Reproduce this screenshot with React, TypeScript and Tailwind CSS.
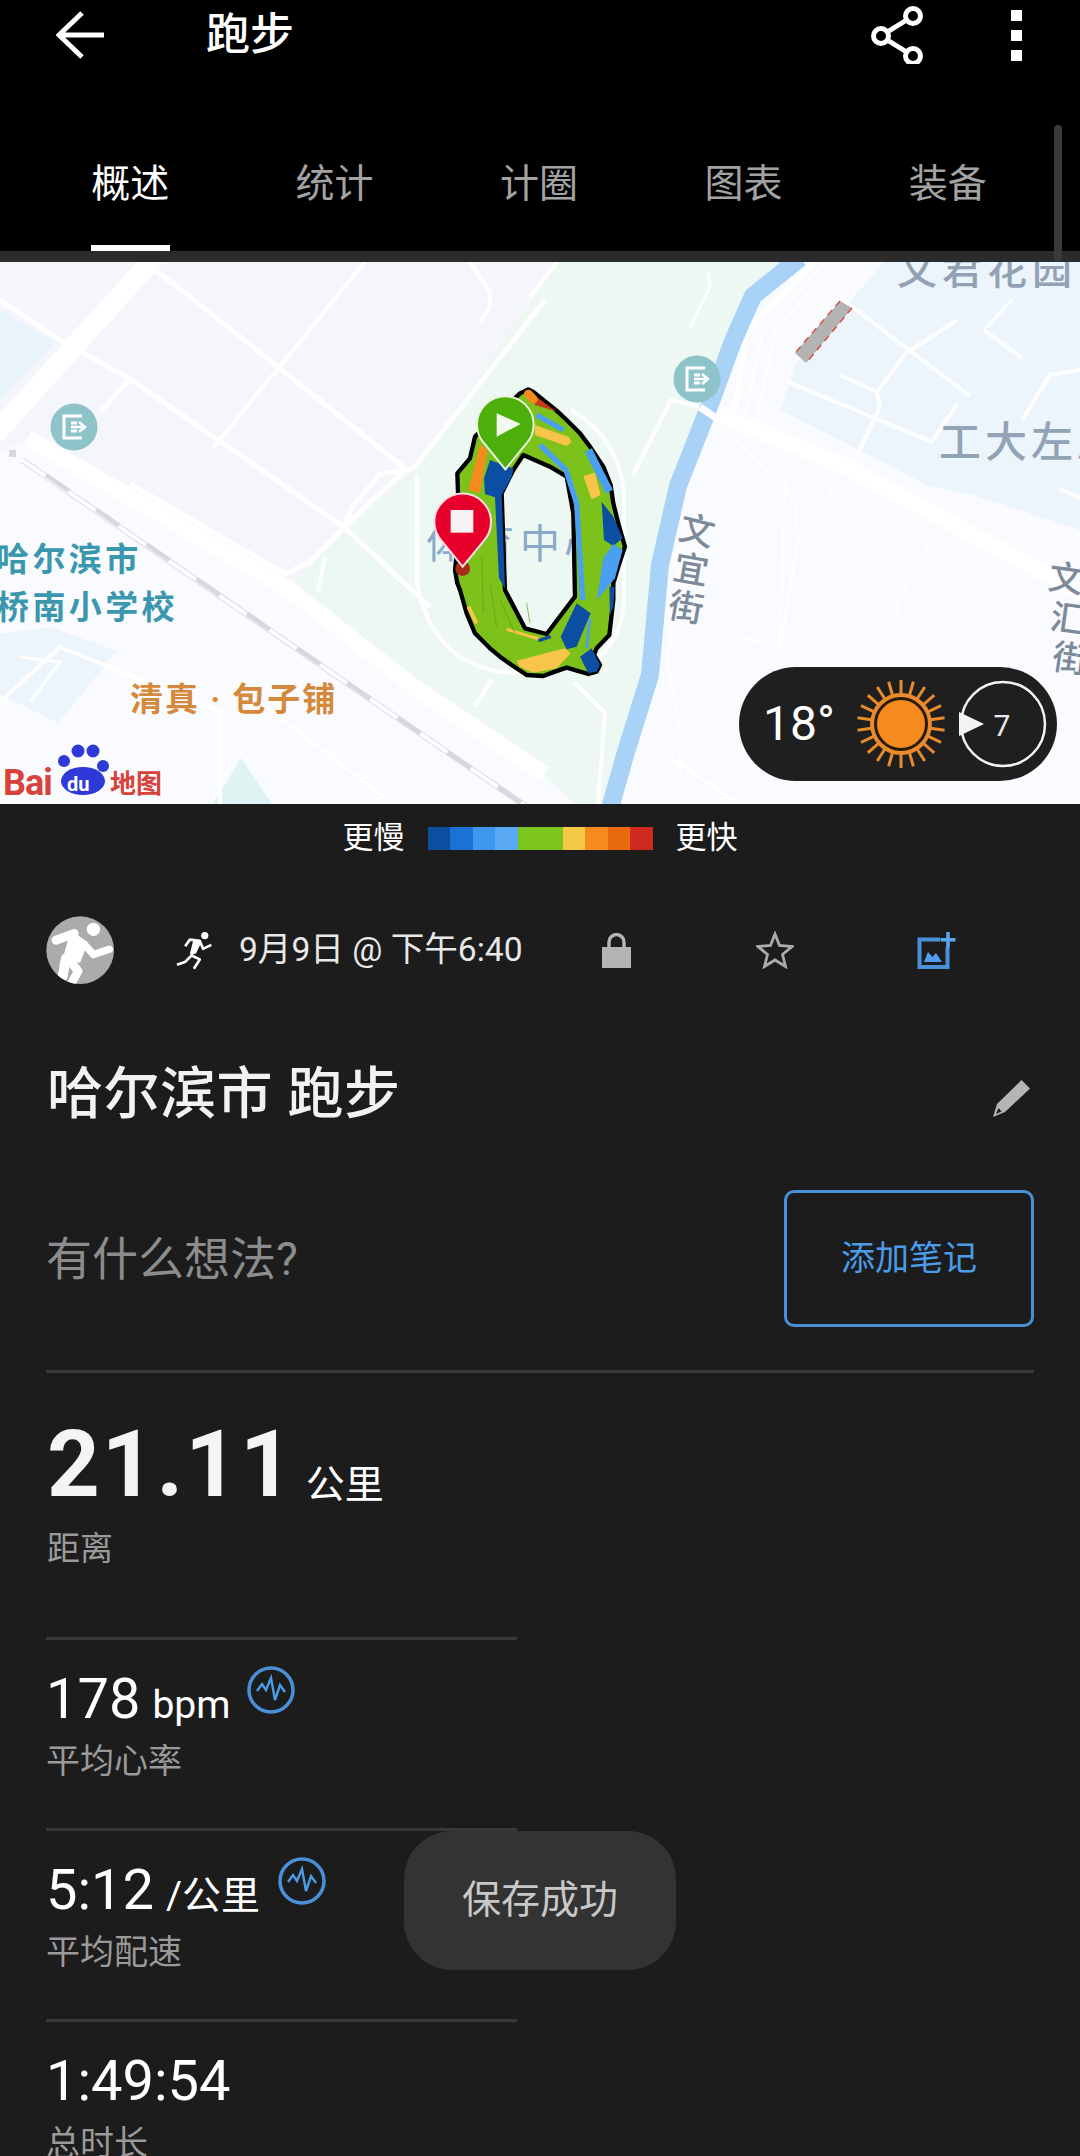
const cjk = "Roboto, 'Noto Sans CJK SC', sans-serif"

const tabs = ["概述", "统计", "计圈", "图表", "装备"]
const legendColors = ["#0b4ea2", "#1a73d4", "#3d97ef", "#5aa9f5", "#7cc51c", "#7cc51c", "#f6c945", "#f58b1f", "#e86a0c", "#cf2a20"]

// white road lines on the map: [path, width]
const roads: [string, number][] = [
  // left side
  ["M155 -5 L-5 172", 20],
  ["M-5 35 L60 78 L130 117 L344 265", 5],
  ["M28 176 L289 327 L413 424 L545 512", 16],
  ["M145 0 L189 34 L406 207", 5],
  ["M365 0 L213 186", 4],
  ["M130 117 L100 150", 5],
  ["M406 207 L344 265 L310 300 L285 312 L130 222", 5],
  ["M344 265 L352 245 L380 212 L413 207", 5],
  ["M344 265 L430 345", 5],
  ["M325 295 L318 330", 4],
  ["M545 38 L413 207", 5],
  ["M470 0 L490 30 L490 45 L480 60", 4],
  ["M0 440 L60 385 L220 450 L220 542", 4],
  ["M20 395 L60 400 L30 440", 3],
  ["M260 440 L390 540", 3],
  // park ring
  ["M417 213 L417 320 Q425 370 460 395 Q490 412 516 410 L590 400 Q620 385 624 340 L624 230 Q618 175 571 148", 4],
  ["M633 213 L671 138 L700 145", 4],
  ["M574 420 L605 451 L598 542", 4],
  ["M492 417 L475 444", 4],
  ["M557 0 L530 35", 4],
  ["M708 10 L710 25 L690 65", 3],
  // right side
  ["M700 145 L843 203 L953 262 L1085 333", 16],
  ["M815 -2 L747 69 L733 155", 5],
  ["M825 0 L762 70 L745 155", 2],
  ["M835 0 L775 70 L757 155", 2],
  ["M843 38 L970 134", 4],
  ["M957 58 L905 92 L877 130 L880 145 L857 193", 4],
  ["M984 68 L1022 96", 4],
  ["M984 68 L1012 38", 3],
  ["M788 120 L932 180 L957 142", 4],
  ["M840 113 L877 130", 4],
  ["M1022 158 L1050 113 L1085 107", 4],
  ["M1060 227 L1085 238", 4],
  ["M730 170 L795 240 L798 276 L780 386", 2],
  ["M745 375 L780 386 L785 220", 2],
  ["M936 268 L898 340 L898 355", 2],
  ["M836 220 L822 248", 2],
  ["M670 495 L735 540", 3],
  ["M680 290 L668 400 L680 470 L680 542", 2],
]

// slanted street label characters: [char, cx, cy, angle]
const streetChars: [string, number, number, number][] = [
  ["文", 697, 281, 14],
  ["宜", 691, 320, 10],
  ["街", 686, 358, 10],
  ["文", 1066, 329, 8],
  ["汇", 1068, 369, 8],
  ["街", 1070, 409, 8],
]

function Route() {
  return (
    <g transform="translate(400 108) scale(0.3333)">
      <path
        d="M385 58 L400 66 L470 122 L500 150 L540 190 L570 230 L610 290 L632 345 L640 400 L655 460 L675 530 L655 590 L640 640 L640 690 L628 795 L590 835 L582 855 L600 885 L590 905 L565 912 L500 893 L465 905 L430 918 L380 915 L335 885 L300 860 L270 835 L225 790 L200 730 L180 660 L172 640 L165 600 L178 480 L172 310 L210 265 L225 200 L360 70 Z M370 255 L340 300 L305 370 L315 660 L375 775 L440 792 L525 680 L520 430 L500 320 L450 290 Z"
        fill="#7cc21a"
        fillRule="evenodd"
        stroke="#000"
        strokeWidth="13"
        strokeLinejoin="round"
      />
      <path d="M398 72 L468 124 L405 105 Z" fill="#c63a17" />
      <path d="M385 72 L400 88" stroke="#f58b1f" strokeWidth="26" strokeLinecap="round" />
      <path d="M410 135 L490 180" stroke="#4a9ff0" strokeWidth="16" />
      <path d="M405 165 L505 200 L515 215 L500 228 L405 195 Z" fill="#f8c44a" />
      <path d="M420 225 L498 300 L530 400 L548 690" stroke="#4a9ff0" strokeWidth="16" fill="none" />
      <path d="M565 240 L628 365" stroke="#4a9ff0" strokeWidth="24" />
      <path d="M550 318 L585 308 L602 375 L575 388 Z" fill="#f8c44a" />
      <path d="M605 395 L640 440 L668 505 L640 528 L612 510 Z" fill="#0b4ea2" />
      <path d="M640 522 L668 540 L645 625 L620 655 L590 690 L610 565 Z" fill="#4a9ff0" />
      <path d="M628 650 L644 650 L640 710 L630 735 Z" fill="#0b4ea2" />
      <path d="M530 700 L572 730 L530 830 L500 838 L482 800 Z" fill="#0b4ea2" />
      <path d="M570 745 L560 835" stroke="#4a9ff0" strokeWidth="8" />
      <path d="M540 860 L575 835 L600 885 L590 905 L565 910 Z" fill="#0b4ea2" />
      <path d="M350 872 L495 835 L512 850 L470 895 L400 908 L358 890 Z" fill="#f8c44a" />
      <path d="M320 778 L420 808" stroke="#f8c44a" strokeWidth="9" />
      <path d="M415 812 L452 800" stroke="#0b4ea2" strokeWidth="10" />
      <path d="M205 710 L230 760" stroke="#f8c44a" strokeWidth="12" />
      <path d="M240 222 L262 240 L240 370 L205 360 Z" fill="#f58b1f" />
      <path d="M270 270 L340 295 L335 322 L305 375 L315 655 L297 625 L285 382 L255 372 L252 325 Z" fill="#0b4ea2" />
      <path d="M245 560 L250 730 M300 690 L345 790 M270 640 L290 770 M380 700 L390 760" stroke="#5d9b12" strokeWidth="2" fill="none" />
      <circle cx="188" cy="596" r="22" fill="#a92c18" />
      {/* start and end pins */}
      <path d="M316 298 L254 222 A85 85 0 1 1 378 222 Z" fill="#4caf0a" stroke="#e9f6df" strokeWidth="6" />
      <path d="M290 130 L362 162 L290 200 Z" fill="#f2f8ee" />
      <path d="M188 590 L126 514 A85 85 0 1 1 250 514 Z" fill="#e8002d" stroke="#f8dfe2" strokeWidth="6" />
      <rect x="152" y="420" width="68" height="68" fill="#f7f3f3" />
    </g>
  )
}

function Poi({ x, y }: { x: number; y: number }) {
  return (
    <g transform={`translate(${x} ${y})`}>
      <circle r="23.5" fill="#8fc3ca" />
      <path d="M8 -11 H-10 V11 H8 M-3 -4 H3 M-3 4 H3" stroke="#fff" strokeWidth="3" fill="none" />
      <path d="M-3 0 H8 M5 -5 L11 0 L5 5" stroke="#fff" strokeWidth="2.5" fill="none" />
    </g>
  )
}

function MapCanvas() {
  return (
    <svg viewBox="0 0 1080 542" className="block h-[542px] w-[1080px]" style={{ fontFamily: cjk }}>
      <rect width="1080" height="542" fill="#fafbfe" />
      {/* built-up blocks */}
      <path d="M0 0 H560 L413 207 L286 327 L28 176 L0 190 Z" fill="#f5f6fc" />
      <path d="M0 48 L55 80 L0 138 Z" fill="#e9f3fb" />
      <path d="M0 372 L50 365 L117 389 L58 461 L0 432 Z" fill="#ecf4fc" />
      <path d="M213 542 L241 496 L272 542 Z" fill="#dff3f3" />
      <path d="M884 0 H1080 V268 L977 234 L929 224 L781 148 L795 103 Z" fill="#ecf4fc" />
      {/* park */}
      <path d="M558 0 H795 L753 34 L733 79 L709 145 L678 224 L660 303 L650 413 L612 542 H575 L540 510 L286 327 L413 207 Z" fill="#edf8f3" />
      {roads.map(([d, w], i) => (
        <path key={i} d={d} stroke="#fff" strokeWidth={w} fill="none" strokeLinejoin="round" />
      ))}
      {/* river */}
      <path
        d="M800 -4 L753 34 L733 79 L709 145 L678 224 L660 303 L650 413 L626 490 L610 546"
        stroke="#a9d2f7"
        strokeWidth="18"
        fill="none"
        strokeLinejoin="round"
      />
      <path d="M700 145 L722 160" stroke="#fff" strokeWidth="7" />
      {/* railway */}
      <rect x="9" y="188" width="7" height="7" fill="#d8d9df" />
      <path d="M22 198 L530 547" stroke="#e2e3e9" strokeWidth="6" fill="none" />
      <path d="M22 198 L530 547" stroke="#fff" strokeWidth="3.5" fill="none" />
      <path d="M46 213 L530 547" stroke="#d6d8de" strokeWidth="4.5" strokeDasharray="28 33" fill="none" />
      {/* bridge works */}
      <path d="M840 39 L852 46 L806 101 L795 91 Z" fill="#b3b3b3" />
      <path d="M840 39 L795 91 M852 46 L806 101" stroke="#d8503f" strokeWidth="1.5" strokeDasharray="7 5" />

      <g fill="#8ba9c9" fontSize="40">
        <text x="426" y="296">体</text>
        <text x="474" y="296">育</text>
        <text x="520" y="296">中</text>
        <text x="564" y="296">心</text>
      </g>

      <Route />
      <Poi x={74} y={165} />
      <Poi x={697} y={117} />

      <text x="897" y="22" fill="#93a1b4" fontSize="40" fontWeight="500" letterSpacing="5">
        文君花园
      </text>
      <text x="939" y="195" fill="#93a3b6" fontSize="42" fontWeight="500" letterSpacing="4">
        工大左岸
      </text>
      <g fill="#7d8a99" fontSize="35" fontWeight="500" textAnchor="middle">
        {streetChars.map(([c, x, y, a], i) => (
          <text key={i} x={x} y={y} transform={`rotate(${a} ${x} ${y - 12})`}>
            {c}
          </text>
        ))}
      </g>
      <g fill="#3b97ad" fontSize="33" fontWeight="700" letterSpacing="3.4">
        <text x="-4" y="309">哈尔滨市</text>
        <text x="-4" y="357">桥南小学校</text>
      </g>
      <text x="130" y="449" fill="#d4893c" fontSize="33" fontWeight="700" letterSpacing="2">
        清真 · 包子铺
      </text>

      {/* baidu logo */}
      <g>
        <circle cx="64" cy="499" r="6" fill="#2e39d8" />
        <circle cx="78" cy="489" r="6.5" fill="#2e39d8" />
        <circle cx="93" cy="489" r="6.5" fill="#2e39d8" />
        <circle cx="103" cy="504" r="6" fill="#2e39d8" />
        <ellipse cx="83" cy="519" rx="22" ry="14" fill="#2e39d8" />
        <text x="3" y="533" fill="#d8423b" fontSize="36" fontWeight="700" letterSpacing="-1">Bai</text>
        <text x="67" y="529" fill="#fff" fontSize="20" fontWeight="700">du</text>
        <text x="110" y="531" fill="#d8423b" fontSize="26" fontWeight="700">地图</text>
      </g>
    </svg>
  )
}

function Sun() {
  const rays = Array.from({ length: 22 }, (_, i) => (i * 360) / 22)
  return (
    <svg viewBox="-48 -48 96 96" className="h-[96px] w-[96px]">
      {rays.map((a) => (
        <line key={a} x1="0" y1="-30" x2="0" y2="-44" stroke="#e98a2c" strokeWidth="3" transform={`rotate(${a})`} />
      ))}
      <circle r="31" fill="#e98a2c" />
      <circle r="25.5" fill="#f58b1f" stroke="#2a1a0a" strokeWidth="3" />
    </svg>
  )
}

function Weather() {
  return (
    <div className="absolute left-[739px] top-[405px] flex h-[114px] w-[318px] items-center rounded-[57px] bg-[#1f1f1f] pl-[24px] text-white">
      <span className="w-[90px] text-[48px] font-normal leading-none">18°</span>
      <Sun />
      <svg viewBox="-48 -48 96 96" className="ml-[6px] h-[96px] w-[96px]">
        <circle r="42" fill="none" stroke="#f3f3f3" strokeWidth="2.5" />
        <path d="M-44 -12 L-19 0 L-44 12 Z" fill="#f3f3f3" />
        <text x="-1" y="12" fill="#e8e8e8" fontSize="30" textAnchor="middle" style={{ fontFamily: cjk }}>
          7
        </text>
      </svg>
    </div>
  )
}

function PulseIcon() {
  return (
    <svg viewBox="0 0 48 48" className="h-[48px] w-[48px]">
      <circle cx="24" cy="24" r="22" fill="none" stroke="#4a90d9" strokeWidth="3.5" />
      <path d="M10 25 L15 18 L19 24 L24 12 L28 34 L33 19 L38 26" fill="none" stroke="#4a9ce8" strokeWidth="2.4" />
    </svg>
  )
}

function Stat({ value, unit, label, pulse, iconGap }: { value: string; unit?: string; label: string; pulse?: boolean; iconGap?: string }) {
  return (
    <div className="h-[191px] border-t-[3px] border-[#383838] pt-[28px]">
      <div className="flex h-[62px] items-end">
        <span className="text-[56px] leading-[62px] text-white">{value}</span>
        {unit && <span className="ml-[12px] text-[39px] leading-[50px] text-white">{unit}</span>}
        {pulse && (
          <span className={`${iconGap} -translate-y-[16px]`}>
            <PulseIcon />
          </span>
        )}
      </div>
      <div className="mt-[9px] text-[34px] leading-[44px] text-[#9a9a9a]">{label}</div>
    </div>
  )
}

export default function App() {
  return (
    <div className="relative h-[2156px] w-[1080px] overflow-hidden bg-[#1c1c1c]" style={{ fontFamily: cjk }}>
      {/* header */}
      <div className="bg-black">
        <div className="flex h-[70px] items-center pl-[56px] pr-[58px]">
          <svg viewBox="0 0 48 48" className="h-[48px] w-[48px]">
            <path d="M48 24 H4 M26 2 L3 24 L26 46" fill="none" stroke="#fff" strokeWidth="5" />
          </svg>
          <span className="ml-[102px] text-[44px] font-medium leading-none text-white">跑步</span>
          <svg viewBox="0 0 60 60" className="ml-auto -translate-y-[1px] translate-x-[1px] h-[60px] w-[60px]">
            <path d="M46 12 L14 32 L46 52" fill="none" stroke="#fff" strokeWidth="5" />
            <circle cx="46" cy="12" r="7.5" fill="#000" stroke="#fff" strokeWidth="5" />
            <circle cx="14" cy="32" r="7.5" fill="#000" stroke="#fff" strokeWidth="5" />
            <circle cx="46" cy="52" r="7.5" fill="#000" stroke="#fff" strokeWidth="5" />
          </svg>
          <div className="ml-[85px] flex flex-col gap-[9px]">
            <span className="h-[11px] w-[11px] bg-white" />
            <span className="h-[11px] w-[11px] bg-white" />
            <span className="h-[11px] w-[11px] bg-white" />
          </div>
        </div>
        <div className="grid h-[181px] grid-cols-5 pl-[28px] pr-[30px]">
          {tabs.map((t, i) => (
            <div key={t} className="relative flex items-start justify-center pt-[90px]">
              <span className={`text-[39px] leading-[48px] ${i === 0 ? "text-white" : "text-[#a3a3a3]"}`}>{t}</span>
              {i === 0 && <span className="absolute bottom-0 h-[6px] w-[79px] bg-white" />}
            </div>
          ))}
        </div>
      </div>
      <div className="h-[11px] bg-[#2b2b2b]" />

      {/* scrollbar */}
      <div className="absolute left-[1054px] top-[125px] h-[137px] w-[8px] rounded-[4px] bg-[#3a3a3a]" />

      {/* map */}
      <div className="relative h-[542px] overflow-hidden">
        <MapCanvas />
        <Weather />
      </div>

      {/* pace legend */}
      <div className="flex h-[68px] items-center justify-center gap-[23px] text-[31px] text-white">
        <span>更慢</span>
        <div className="flex h-[23px] w-[225px]">
          {legendColors.map((c, i) => (
            <div key={i} className="flex-1" style={{ backgroundColor: c }} />
          ))}
        </div>
        <span>更快</span>
      </div>

      {/* activity meta row */}
      <div className="flex h-[156px] items-center pl-[46px]">
        <svg viewBox="45 32 205 205" className="h-[68px] w-[68px]">
          <defs>
            <clipPath id="avatar-clip">
              <circle cx="148" cy="135" r="102" />
            </clipPath>
          </defs>
          <circle cx="148" cy="135" r="102" fill="#ababab" />
          <g clipPath="url(#avatar-clip)" fill="none" stroke="#fff" strokeLinecap="round" strokeLinejoin="round">
            <circle cx="188" cy="72" r="20" fill="#fff" stroke="none" />
            <path d="M120 75 L172 112 L148 172 L92 172 Z" fill="#fff" stroke="none" />
            <path d="M75 105 L130 85" strokeWidth="27" />
            <path d="M105 160 L95 215" strokeWidth="30" />
            <path d="M120 170 L142 198 L122 235" strokeWidth="26" />
            <path d="M165 122 L188 148 L236 132" strokeWidth="22" />
          </g>
        </svg>
        <svg viewBox="430 70 125 130" className="ml-[59px] h-[43px] w-[42px]">
          <circle cx="525" cy="90" r="11" fill="#fff" />
          <path
            d="M466 122 L480 102 L510 106 L520 130 L545 118 M502 106 L485 150 L465 170 L441 178 M485 150 L510 162 L492 190"
            fill="none"
            stroke="#fff"
            strokeWidth="8"
            strokeLinejoin="round"
          />
          <path d="M490 105 L515 110 L498 145 L480 145 Z" fill="#fff" />
        </svg>
        <span className="ml-[24px] w-[286px] whitespace-nowrap text-[33.6px] leading-none text-[#e8e8e8]">9月9日 @ 下午6:40</span>
        <svg viewBox="0 0 29 36" className="ml-[77px] h-[36px] w-[29px]">
          <path d="M7 17 V10 A7.5 7.5 0 0 1 22 10 V17" fill="none" stroke="#b5b5b5" strokeWidth="3.5" />
          <rect x="0" y="15" width="29" height="21" fill="#b5b5b5" />
        </svg>
        <svg viewBox="0 0 38 38" className="ml-[125px] h-[38px] w-[38px]">
          <path d="M19 3 L23.5 14.5 L36 15.5 L26.5 23.5 L29.5 35.5 L19 29 L8.5 35.5 L11.5 23.5 L2 15.5 L14.5 14.5 Z" fill="none" stroke="#ababab" strokeWidth="2.8" />
        </svg>
        <svg viewBox="0 0 43 43" className="ml-[121px] h-[43px] w-[43px]">
          <path d="M25 10.5 H4.5 V38 H32.5 V18" fill="none" stroke="#4a90d9" strokeWidth="4" />
          <path d="M33 3 V18.5 M25.5 10.7 H40.5" fill="none" stroke="#5aa5ee" strokeWidth="3.6" />
          <path d="M9 33 L13 23 L17.5 28 L21 24 L27 33 Z" fill="#4f9df0" />
        </svg>
      </div>

      {/* title */}
      <div className="flex h-[128px] items-center justify-between pl-[47px] pr-[47px] pt-[4px]">
        <h1 className="text-[56px] font-medium leading-none tracking-[0.5px] text-[#f2f2f2]">哈尔滨市 跑步</h1>
        <svg viewBox="0 0 43 43" className="mt-[8px] h-[43px] w-[43px]">
          <path d="M31.5 3 L40 11.5 L15 35 L3 40 L7 27 Z" fill="#b5b5b5" />
          <path d="M8.5 31 L11.5 34.5 L6 37 Z" fill="#1c1c1c" />
        </svg>
      </div>

      {/* note */}
      <div className="mx-[46px] mt-[34px] flex items-center justify-between border-b-[3px] border-[#383838] pb-[43px]">
        <span className="text-[46px] leading-none text-[#8c8c8c]">有什么想法?</span>
        <button className="h-[137px] w-[250px] rounded-[10px] border-[3px] border-[#4a90d9] text-[34px] text-[#4a9ce8]">
          添加笔记
        </button>
      </div>

      {/* distance */}
      <div className="mx-[47px] h-[264px] pt-[42px]">
        <div className="flex items-end">
          <span className="text-[92px] font-bold leading-[100px] tracking-[2px] text-[#f4f4f4]">21.11</span>
          <span className="ml-[11px] pb-[6px] text-[39px] leading-[48px] text-white">公里</span>
        </div>
        <div className="mt-[12px] text-[33px] leading-[44px] text-[#9a9a9a]">距离</div>
      </div>

      {/* stats */}
      <div className="ml-[46px] w-[471px]">
        <Stat value="178" unit="bpm" label="平均心率" pulse iconGap="ml-[17px]" />
        <Stat value="5:12" unit="/公里" label="平均配速" pulse iconGap="ml-[18px]" />
        <Stat value="1:49:54" label="总时长" />
      </div>

      {/* toast */}
      <div className="absolute left-[404px] top-[1831px] flex h-[139px] w-[272px] items-center justify-center rounded-[48px] bg-[#333333] text-[39px] text-[#c8c8c8]">
        保存成功
      </div>
    </div>
  )
}
